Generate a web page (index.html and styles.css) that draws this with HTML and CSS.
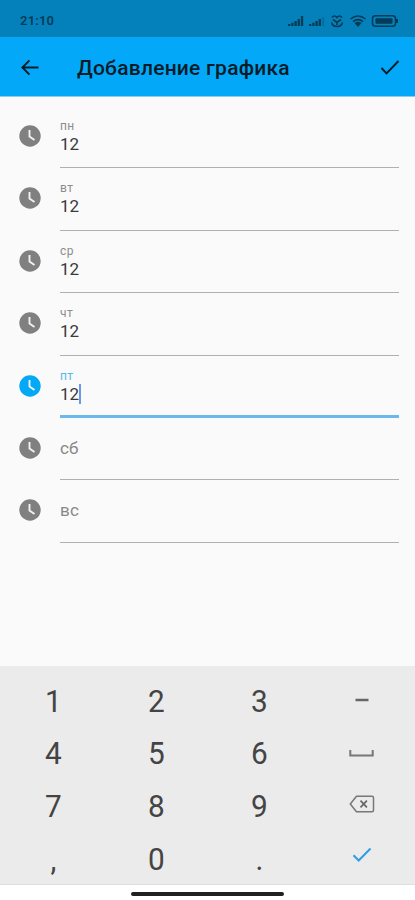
FILE: index.html
```
<!DOCTYPE html>
<html lang="ru">
<head>
<meta charset="utf-8">
<title>Добавление графика</title>
<link rel="stylesheet" href="styles.css">
</head>
<body>
<svg class="defs" width="0" height="0">
  <symbol id="clock" viewBox="0 0 22 22"><circle cx="11" cy="11" r="10.7" fill="currentColor"/><path d="M10.5 5v6.500l5 3.500" fill="none" stroke="#f2f2f2" stroke-width="1.9"/></symbol>
</svg>
<header>
  <div class="status">
    <span class="time">21:10</span>
    <svg class="indicators" width="112" height="16" viewBox="0 0 112 16">
      <g stroke="currentColor" stroke-width="2.3">
        <path d="M2.2 13v-2M5.4 13v-3.3M8.6 13V8M11.8 13V6M15 13V3"/>
        <path d="M23.2 13v-2M26.4 13v-3.3M29.6 13V8M32.8 13V6"/>
        <path d="M36 13V4" opacity=".25"/>
      </g>
      <g fill="none" stroke="currentColor" stroke-width="1.6">
        <path d="M45 4.500q2.500-3 5 0q2.500-3 5 0M46 6.500l4 3L54 6.500M44.500 9.500q1 4 5.500 4t5.500-4M50 8v4"/>
        <path d="M63.500 6q7.500-6 15 0M66 8.600q5-4 10 0"/>
      </g>
      <path d="M67.500 10q3.500-2.500 7 0L71 14z" fill="currentColor"/>
      <rect x="85.500" y="2.800" width="23" height="10.400" rx="3" fill="none" stroke="currentColor" stroke-width="1.5"/>
      <rect x="88.500" y="5.300" width="17" height="5.400" rx="1" fill="currentColor"/>
      <path d="M110 6v4" stroke="currentColor" stroke-width="2"/>
    </svg>
  </div>
  <div class="appbar">
    <svg class="back" width="18" height="18" viewBox="0 0 18 18"><path d="M17.500 8.500H1.500M8.500 1.300L1.300 8.500L8.500 15.700" fill="none" stroke="currentColor" stroke-width="1.900"/></svg>
    <h1>Добавление графика</h1>
    <svg class="done" width="20" height="16" viewBox="0 0 20 16"><path d="M1.500 8l5 5.300L18.500 1" fill="none" stroke="currentColor" stroke-width="1.900"/></svg>
  </div>
</header>
<main>
  <div class="row"><svg class="clock"><use href="#clock"/></svg><div class="field"><label>пн</label><span class="value">12</span></div></div>
  <div class="row"><svg class="clock"><use href="#clock"/></svg><div class="field"><label>вт</label><span class="value">12</span></div></div>
  <div class="row"><svg class="clock"><use href="#clock"/></svg><div class="field"><label>ср</label><span class="value">12</span></div></div>
  <div class="row"><svg class="clock"><use href="#clock"/></svg><div class="field"><label>чт</label><span class="value">12</span></div></div>
  <div class="row active"><svg class="clock"><use href="#clock"/></svg><div class="field"><label>пт</label><span class="value">12<i class="caret"></i></span></div></div>
  <div class="row"><svg class="clock"><use href="#clock"/></svg><div class="field empty"><span class="hint">сб</span></div></div>
  <div class="row"><svg class="clock"><use href="#clock"/></svg><div class="field empty"><span class="hint">вс</span></div></div>
</main>
<section class="keypad">
  <span class="digit">1</span><span class="digit">2</span><span class="digit">3</span>
  <span><svg width="14" height="4" viewBox="0 0 14 4"><path d="M0.500 2h13" stroke="#666" stroke-width="2.500"/></svg></span>
  <span class="digit">4</span><span class="digit">5</span><span class="digit">6</span>
  <span><svg width="25" height="8" viewBox="0 0 25 8"><path d="M1.300 1v5.500h22.400V1" fill="none" stroke="#777" stroke-width="2"/></svg></span>
  <span class="digit">7</span><span class="digit">8</span><span class="digit">9</span>
  <span><svg class="erase" width="26" height="18" viewBox="0 0 26 18"><path d="M7.500 1.200H23q1.500 0 1.500 1.500v12.600q0 1.500-1.500 1.500H7.500L1.300 9z" fill="none" stroke="#777" stroke-width="1.500" stroke-linejoin="round"/><path d="M11.500 5.700l6.400 6.600M17.900 5.700l-6.400 6.600" stroke="#666" stroke-width="1.700"/></svg></span>
  <span class="digit">,</span><span class="digit">0</span><span class="digit">.</span>
  <span><svg class="enter" width="20" height="16" viewBox="0 0 20 16"><path d="M1.500 8.300l5.200 5.200L18.500 1.500" fill="none" stroke="#2f9fe0" stroke-width="2"/></svg></span>
</section>
<footer><div class="pill"></div></footer>
</body>
</html>
```

FILE: styles.css
```
* { box-sizing: border-box; }

body {
  margin: 0;
  width: 415px;
  height: 900px;
  display: flex;
  flex-direction: column;
  overflow: hidden;
  background: #fafafa;
  font-family: Roboto, "Liberation Sans", sans-serif;
}

svg { display: block; flex: none; }
.defs { position: absolute; }

.status {
  height: 37px;
  padding: 4px 16px 0 20px;
  display: flex;
  align-items: center;
  justify-content: space-between;
  background: #0481bb;
  color: #053b55;
}

.time { font-size: 13px; font-weight: 600; letter-spacing: 0.2px; }

.appbar {
  height: 60px;
  padding: 2px 15px 0 21px;
  display: flex;
  align-items: center;
  background: #03a9f8;
  color: #051c28;
  border-bottom: 1px solid #8fcbea;
}

h1 {
  margin: 0 auto 0 38px;
  font-size: 21px;
  font-weight: 500;
  letter-spacing: 0.24px;
  white-space: nowrap;
}

main {
  flex: 1;
  padding: 9px 16px 0 19px;
}

.row {
  height: 62.4px;
  display: flex;
  align-items: flex-start;
  color: #808080;
}

.clock { width: 22px; height: 22px; margin: 19px 19px 0 0; }

.field {
  flex: 1;
  height: 62.4px;
  padding-top: 13px;
  display: flex;
  flex-direction: column;
  border-bottom: 1.5px solid #b0b0b0;
}

label { font-size: 12px; line-height: 14px; letter-spacing: 0.4px; color: #8c8c8c; }

.value {
  display: flex;
  align-items: center;
  font-size: 17px;
  line-height: 23px;
  color: #3a3a3a;
}

.hint { padding-top: 7px; font-size: 17px; line-height: 20px; letter-spacing: 0.2px; color: #888; }

.active { color: #03a9f4; }
.active label { color: #4fb9e8; }
.active .field { border-bottom: 3px solid #6bb8ea; }
.caret { width: 2px; height: 20px; background: #6f95ee; }

.keypad {
  height: 218px;
  padding: 8px 1px 0 2px;
  display: grid;
  grid-template-columns: repeat(4, 102.8px);
  grid-template-rows: repeat(4, 52.6px);
  background: #ebebeb;
  color: #444;
  font-size: 32px;
}

.keypad span { display: flex; align-items: center; justify-content: center; }
.keypad .digit { padding-top: 1px; transform: scaleX(0.93); }
.erase { margin-top: -2px; }
.enter { margin-top: -7px; }

footer {
  height: 16px;
  padding-top: 7px;
  background: #fff;
  border-top: 1px solid #dedede;
}

.pill { width: 153px; height: 4px; margin: 0 auto; border-radius: 2px; background: #202020; }
```
